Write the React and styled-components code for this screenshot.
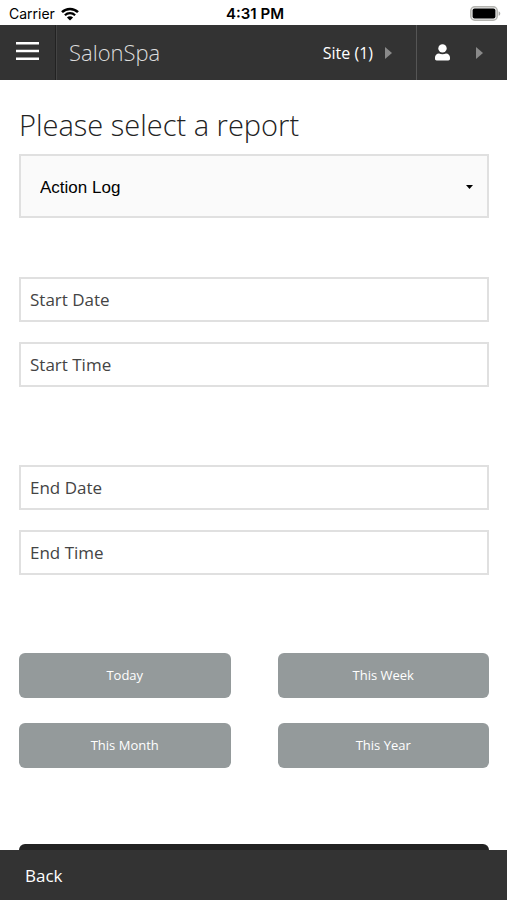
import React, { useState } from 'react';
import styled, { createGlobalStyle } from 'styled-components'

function WifiIcon() {
    return (
        <svg width="18" height="14" viewBox="0 0 18 14" aria-hidden="true">
            <path d="M1 5.2a11.3 11.3 0 0 1 16 0" fill="none" stroke="#000" strokeWidth="2.5" />
            <path d="M3.9 8.2a7.2 7.2 0 0 1 10.2 0" fill="none" stroke="#000" strokeWidth="2.2" />
            <path d="M9 13.6 5.9 10.5a4.4 4.4 0 0 1 6.2 0z" fill="#000" />
        </svg>
    )
}

function BatteryIcon() {
    return (
        <svg width="31" height="15" viewBox="0 0 31 15" aria-hidden="true">
            <rect x="0.8" y="0.8" width="26.4" height="13.4" rx="4" fill="#eee" stroke="#b4b4b0" strokeWidth="1.5" />
            <rect x="2.6" y="2.6" width="22.8" height="9.8" rx="2" fill="#000" />
            <path d="M28.6 5.2c2.2 0.9 2.2 3.7 0 4.6z" fill="#a9a9a6" />
        </svg>
    )
}

function MenuIcon() {
    return (
        <svg width="23" height="18" viewBox="0 0 23 18" aria-hidden="true">
            <path d="M0 1.3h23M0 9h23M0 16.7h23" stroke="#fff" strokeWidth="2.5" />
        </svg>
    )
}

function UserIcon() {
    return (
        <svg width="15" height="17" viewBox="0 0 15 17" aria-hidden="true">
            <circle cx="7.5" cy="4.4" r="4.2" fill="#fff" />
            <path d="M0 14.8V13.4C0 11 1.7 9.6 4 9.4c2 1 5 1 7 0 2.300 0.200 4 1.600 4 4v1.400c0 1-0.700 1.700-1.700 1.700H1.700C0.700 16.500 0 15.800 0 14.800z" fill="#fff" />
        </svg>
    )
}

function ArrowIcon() {
    return (
        <svg width="7" height="12" viewBox="0 0 7 12" aria-hidden="true">
            <path d="M0 0 7 6 0 12z" fill="#8a8a8a" />
        </svg>
    )
}

function CaretIcon() {
    return (
        <svg width="7" height="4" viewBox="0 0 7 4" aria-hidden="true">
            <path d="M0 0h7L3.500 4z" fill="#000" />
        </svg>
    )
}

const ranges = ['Today', 'This Week', 'This Month', 'This Year']

function App() {
    const [report, setReport] = useState('Action Log')

    return (
        <Screen>
            <GlobalStyle />
            <StatusBar>
                <Carrier>Carrier <WifiIcon /></Carrier>
                <Clock>4:31 PM</Clock>
                <Battery><BatteryIcon /></Battery>
            </StatusBar>
            <TopBar>
                <MenuButton aria-label="Menu"><MenuIcon /></MenuButton>
                <Brand href="#">SalonSpa</Brand>
                <SiteButton>Site (1) <ArrowIcon /></SiteButton>
                <UserButton aria-label="Account"><UserIcon /><ArrowIcon /></UserButton>
            </TopBar>
            <Content>
                <Title htmlFor="report">Please select a report</Title>
                <SelectBox>
                    <Select id="report" value={report} onChange={e => setReport(e.target.value)}>
                        <option>Action Log</option>
                    </Select>
                    <CaretHolder><CaretIcon /></CaretHolder>
                </SelectBox>
                <Fields>
                    <Field placeholder="Start Date" aria-label="Start Date" />
                    <Field placeholder="Start Time" aria-label="Start Time" />
                </Fields>
                <Fields>
                    <Field placeholder="End Date" aria-label="End Date" />
                    <Field placeholder="End Time" aria-label="End Time" />
                </Fields>
                <Ranges>
                    {ranges.map(range => <RangeButton key={range}>{range}</RangeButton>)}
                </Ranges>
                <SubmitButton aria-label="Submit" />
            </Content>
            <BottomBar>
                <BackButton>Back</BackButton>
            </BottomBar>
        </Screen>
    )
};

const GlobalStyle = createGlobalStyle`
    * {
        box-sizing: border-box;
    }

    body {
        margin: 0;
        background: white;
        font-family: "Open Sans", sans-serif;
    }

    svg {
        display: block;
        flex: none;
    }

    button, input, select {
        font-family: inherit;
        margin: 0;
    }
`

const Screen = styled.div`
    display: flex;
    flex-direction: column;
    height: 100vh;
`

const StatusBar = styled.div`
    display: grid;
    grid-template-columns: 1fr auto 1fr;
    align-items: center;
    flex: none;
    height: 25px;
    padding: 2px 6px 0 9px;
    font-family: Inter, "Liberation Sans", sans-serif;
    font-size: 14px;
    color: black;
`

const Carrier = styled.div`
    display: flex;
    align-items: center;
    gap: 6px;
`

const Clock = styled.div`
    font-size: 15px;
    font-weight: 600;
`

const Battery = styled.div`
    display: flex;
    justify-content: flex-end;
`

const TopBar = styled.header`
    display: flex;
    align-items: stretch;
    flex: none;
    height: 55px;
    background: #333;
`

const BarButton = styled.button`
    display: flex;
    align-items: center;
    padding: 0;
    border: 0;
    background: none;
    color: white;
    font-size: 16px;
`

const MenuButton = styled(BarButton)`
    justify-content: center;
    width: 56px;
    padding-bottom: 4px;
    border-right: 1px solid #222;
`

const Brand = styled.a`
    display: flex;
    align-items: center;
    flex: 1;
    padding: 0 0 2px 12px;
    border-left: 1px solid #444;
    color: #ddd;
    font-size: 22px;
    font-weight: 300;
    line-height: 30px;
    text-decoration: none;
`

const SiteButton = styled(BarButton)`
    gap: 12px;
    padding-right: 24px;
`

const UserButton = styled(BarButton)`
    justify-content: space-between;
    width: 91px;
    padding: 0 24px 0 18px;
    border-left: 1px solid #555;
`

const Content = styled.main`
    flex: 1;
    min-height: 0;
    overflow-y: auto;
    scrollbar-width: none;
    padding: 24px 18px 0 19px;
`

const Title = styled.label`
    display: block;
    margin-bottom: 8px;
    color: #222;
    font-size: 29px;
    font-weight: 300;
    line-height: 42px;
`

const SelectBox = styled.div`
    position: relative;
    margin-bottom: 59px;
`

const Select = styled.select`
    display: block;
    width: 100%;
    height: 64px;
    padding: 2px 19px 0;
    appearance: none;
    border: 2px solid #e0e0e0;
    border-radius: 0;
    background: #fafafa;
    color: black;
    font-family: "Liberation Sans", sans-serif;
    font-size: 17px;
`

const CaretHolder = styled.span`
    position: absolute;
    top: 31px;
    right: 16px;
    pointer-events: none;
`

const Fields = styled.div`
    display: grid;
    gap: 20px;
    margin-bottom: 78px;
`

const Field = styled.input`
    width: 100%;
    height: 45px;
    padding: 0 9px;
    border: 2px solid #e0e0e0;
    border-radius: 0;
    background: white;
    color: #444;
    font-size: 17px;

    &::placeholder {
        color: #444;
        opacity: 1;
    }
`

const Ranges = styled.div`
    display: grid;
    grid-template-columns: 1fr 1fr;
    gap: 25px 47px;
    margin-bottom: 76px;
`

const RangeButton = styled.button`
    height: 45px;
    padding: 0 0 1px;
    border: 0;
    border-radius: 6px;
    background: #949a9b;
    color: white;
    font-size: 13px;
`

const SubmitButton = styled.button`
    display: block;
    width: 100%;
    height: 45px;
    border: 0;
    border-radius: 6px;
    background: #222;
`

const BottomBar = styled.footer`
    display: flex;
    flex: none;
    height: 50px;
    background: #333;
`

const BackButton = styled(BarButton)`
    padding: 0 25px;
    font-size: 17px;
`

export default App
